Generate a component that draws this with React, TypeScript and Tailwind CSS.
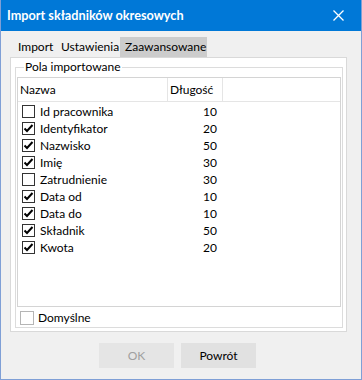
import React from "react";

const rows: { name: string; len: number; checked: boolean }[] = [
  { name: "Id pracownika", len: 10, checked: false },
  { name: "Identyfikator", len: 20, checked: true },
  { name: "Nazwisko", len: 50, checked: true },
  { name: "Imię", len: 30, checked: true },
  { name: "Zatrudnienie", len: 30, checked: false },
  { name: "Data od", len: 10, checked: true },
  { name: "Data do", len: 10, checked: true },
  { name: "Składnik", len: 50, checked: true },
  { name: "Kwota", len: 20, checked: true },
];

function Check({ checked }: { checked: boolean }) {
  return (
    <div className="w-[13px] h-[13px] border border-[#333333] bg-white flex items-center justify-center">
      {checked && (
        <svg width="11" height="11" viewBox="0 0 11 11">
          <polyline
            points="1.5,5.5 4,8 9.5,2"
            fill="none"
            stroke="#000"
            strokeWidth="2"
          />
        </svg>
      )}
    </div>
  );
}

export default function App() {
  return (
    <div
      className="w-[362px] h-[380px] flex flex-col bg-[#f0f0f0] border-x border-b border-[#7f9fd6] text-[12px] text-black"
      style={{ fontFamily: "Lato, 'Liberation Sans', sans-serif" }}
    >
      {/* title bar */}
      <div className="h-[31px] bg-[#0078d7] flex items-center justify-between pl-[6px] pr-[17px] shrink-0">
        <span className="text-white font-bold text-[12.7px]">Import składników okresowych</span>
        <svg width="11" height="11" viewBox="0 0 11 11">
          <path d="M0.5 0.5 L10.5 10.5 M10.5 0.5 L0.5 10.5" stroke="#fff" strokeWidth="1.3" />
        </svg>
      </div>

      {/* tabs */}
      <div className="flex pl-[12px] pt-[6px] h-[26px]">
        <div className="w-[44px] h-[20px] flex items-center pl-[5px]">Import</div>
        <div className="w-[63px] h-[20px] flex items-center pl-[4px]">Ustawienia</div>
        <div className="w-[87px] h-[20px] flex items-center pl-[5px] bg-[#cccccc]">Zaawansowane</div>
      </div>

      {/* tab panel */}
      <div className="ml-[9px] w-[337px] h-[275px] bg-white border border-[#d9d9d9] px-[4px] pt-[9px]">
        <div className="relative w-[328px] h-[261px] border border-[#dcdcdc] px-[1px] pt-[9px]">
          <span className="absolute left-[8px] top-[-8px] bg-white px-[1px] leading-[14px]">
            Pola importowane
          </span>
          <div className="w-[324px] h-[230px] border border-[#d4d4d4] flex flex-col">
            <div className="h-[24px] flex border-b border-[#e5e5e5] bg-white">
              <div className="w-[150px] flex items-center pl-[2px] border-r border-[#e5e5e5]">Nazwa</div>
              <div className="w-[55px] flex items-center pl-[2px] border-r border-[#e5e5e5]">Długość</div>
            </div>
            <div className="flex flex-col pt-[1px]">
              {rows.map((r) => (
                <div key={r.name} className="h-[17px] flex items-center">
                  <div className="w-[150px] flex items-center pl-[4px] gap-[5px]">
                    <Check checked={r.checked} />
                    <span>{r.name}</span>
                  </div>
                  <div className="w-[55px] text-right pr-[6px]">{r.len}</div>
                </div>
              ))}
            </div>
          </div>
          <div className="flex items-center pl-[3px] pt-[2px] gap-[4px]">
            <div className="w-[14px] h-[14px] border border-[#b5b5b5] bg-white" />
            <span>Domyślne</span>
          </div>
        </div>
      </div>

      {/* buttons */}
      <div className="flex gap-[7px] pt-[11px] pl-[98px]">
        <div className="w-[75px] h-[25px] bg-[#e5e5e5] flex items-center justify-center text-[#a0a0a0]">
          OK
        </div>
        <div className="w-[75px] h-[25px] bg-[#e1e1e1] flex items-center justify-center">
          Powrót
        </div>
      </div>
    </div>
  );
}
